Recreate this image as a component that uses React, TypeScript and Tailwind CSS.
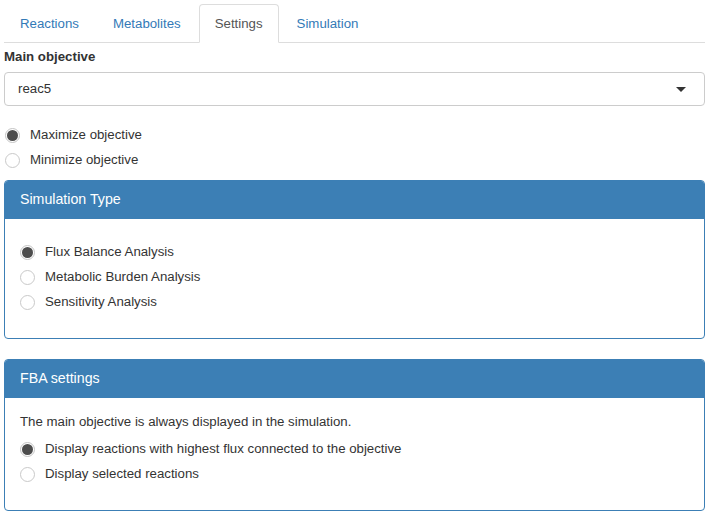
function Radio({ checked, label }: { checked?: boolean; label: string }) {
  return (
    <label className="flex items-center h-5 gap-[10px] cursor-pointer">
      <span
        className={
          "w-[15px] h-[15px] rounded-full border flex items-center justify-center bg-white " +
          (checked ? "border-[#c4c4c4]" : "border-[#c9c9c9]")
        }
      >
        {checked && <span className="w-[11px] h-[11px] rounded-full bg-[#4d4d4d]" />}
      </span>
      <span>{label}</span>
    </label>
  );
}

function Panel({ title, children }: { title: string; children: React.ReactNode }) {
  return (
    <div className="border border-[#3c7fb5] rounded-[4px] bg-white">
      <div className="bg-[#3c7fb5] text-white text-[14.2px] leading-[18px] px-[15px] pt-[9px] pb-[11px] rounded-t-[3px]">
        {title}
      </div>
      {children}
    </div>
  );
}

export default function App() {
  const tabs = ["Reactions", "Metabolites", "Settings", "Simulation"];
  return (
    <div
      className="bg-white text-[#333] text-[13.25px] leading-5 pl-[4px] pr-[5px] pt-[4px] min-h-[517px]"
      style={{ fontFamily: '"Liberation Sans", Arial, sans-serif' }}
    >
      <ul className="flex border-b border-[#ddd]">
        {tabs.map((t) => (
          <li key={t} className="mr-[2px] -mb-px">
            <a
              className={
                "block px-[15px] py-[10px] leading-[17px] border rounded-t-[4px] " +
                (t === "Settings"
                  ? "border-[#ddd] border-b-white bg-white text-[#555]"
                  : "border-transparent text-[#337ab7]")
              }
            >
              {t}
            </a>
          </li>
        ))}
      </ul>

      <div className="mt-[4px] mb-[19px]">
        <div className="font-bold mb-[5px]">Main objective</div>
        <div className="h-[34px] border border-[#ccc] rounded-[4px] flex items-center justify-between pl-[13px] pr-[18px]">
          <span>reac5</span>
          <span className="w-0 h-0 border-l-[5px] border-r-[5px] border-t-[5px] border-l-transparent border-r-transparent border-t-[#333]" />
        </div>
      </div>

      <div className="flex flex-col gap-[5px] mb-[10px] pl-[1px]">
        <Radio checked label="Maximize objective" />
        <Radio label="Minimize objective" />
      </div>

      <Panel title="Simulation Type">
        <div className="px-[15px] pt-[23px] pb-[26px] flex flex-col gap-[5px]">
          <Radio checked label="Flux Balance Analysis" />
          <Radio label="Metabolic Burden Analysis" />
          <Radio label="Sensitivity Analysis" />
        </div>
      </Panel>

      <div className="h-5" />

      <Panel title="FBA settings">
        <div className="px-[15px] pt-[14px] pb-[26px]">
          <p className="mb-[7px]">The main objective is always displayed in the simulation.</p>
          <div className="flex flex-col gap-[5px]">
            <Radio checked label="Display reactions with highest flux connected to the objective" />
            <Radio label="Display selected reactions" />
          </div>
        </div>
      </Panel>
    </div>
  );
}
